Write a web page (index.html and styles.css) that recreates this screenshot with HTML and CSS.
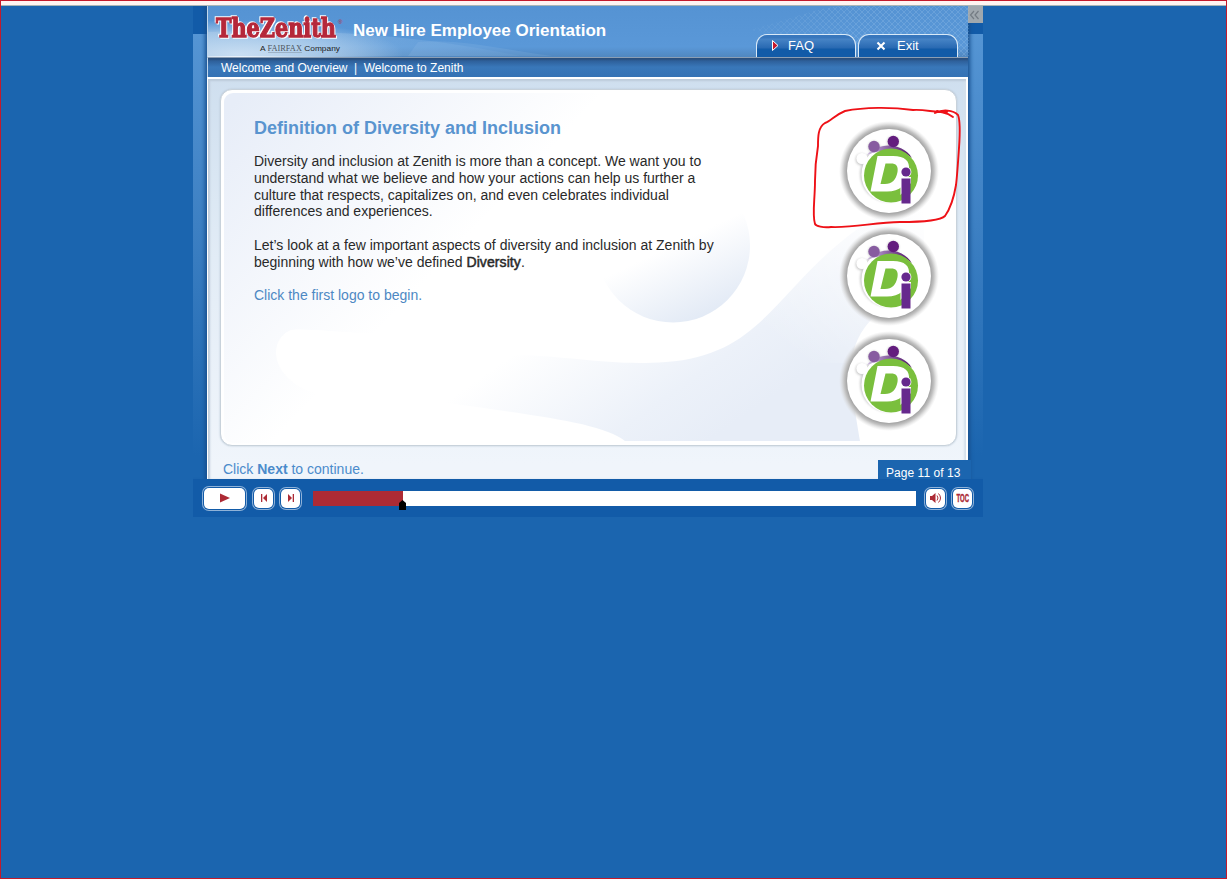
FILE: index.html
```html
<!DOCTYPE html>
<html lang="en">
<head>
<meta charset="utf-8">
<title>New Hire Employee Orientation</title>
<link rel="stylesheet" href="styles.css">
</head>
<body>
<svg class="defs" width="0" height="0">
  <defs>
    <radialGradient id="halo"><stop offset=".82" stop-color="#999"/><stop offset=".9" stop-color="#c4c4c4"/><stop offset="1" stop-color="#ddd" stop-opacity="0"/></radialGradient>
    <linearGradient id="arc"><stop offset="0" stop-color="#cdbbe0"/><stop offset=".5" stop-color="#875ca0"/><stop offset="1" stop-color="#511269"/></linearGradient>
    <filter id="soft" x="-30%" y="-30%" width="160%" height="160%"><feGaussianBlur stdDeviation="1"/></filter>
    <symbol id="di" viewBox="0 0 100 100">
      <circle cx="50" cy="50" r="50" fill="url(#halo)"/>
      <circle cx="50" cy="50" r="42" fill="#fff"/>
      <g filter="url(#soft)" fill="#aaa" opacity=".6"><circle cx="22.500" cy="38.500" r="6"/><circle cx="49" cy="53" r="28"/><circle cx="35" cy="26" r="6"/><circle cx="54" cy="21" r="6"/></g>
      <circle cx="23" cy="37.500" r="5.600" fill="#fff"/>
      <circle cx="51" cy="53.500" r="28.500" fill="#fff"/>
      <path d="M28 34C38 22 62 20 73 37C63 28 44 27 28 34Z" fill="url(#arc)"/>
      <circle cx="35" cy="25.500" r="5.700" fill="#875ca0"/>
      <circle cx="54.300" cy="20.500" r="5.700" fill="#631d7e"/>
      <circle cx="52" cy="54.500" r="27" fill="#7abf3d"/>
      <path fill-rule="evenodd" d="M38.500 35H54C66 35 71 40 70 49C68 64 61 70.500 48 70.500H31.500ZM46.500 42.500L41.500 63H46C53 63 57 59 58.500 51C59.500 45 57 42.500 52 42.500Z" fill="#fff"/>
      <path d="M61.500 56H72V62L61.500 74Z" fill="#fff"/>
      <circle cx="67" cy="51" r="5.400" fill="#fff"/>
      <circle cx="67" cy="51" r="4.600" fill="#66298d"/><path d="M62.500 57.500H71.500V82.500H62.500Z" fill="#66298d"/>
    </symbol>
  </defs>
</svg>
<div class="page">
  <div class="player">
    <div class="stage">
      <div class="wing wing-left"></div>
      <div class="course">
        <header class="header">
          <svg class="header-art" width="761" height="51" viewBox="0 0 761 51">
            <defs>
              <pattern id="mesh" width="6" height="6" patternUnits="userSpaceOnUse"><path d="M0 0L6 6M6 0L0 6" stroke="#a9ccee" stroke-width=".8" opacity=".3" fill="none"/></pattern>
              <linearGradient id="wave" x1="0" x2="1"><stop offset="0" stop-color="#a9cae9" stop-opacity=".6"/><stop offset="1" stop-color="#8dbbe6" stop-opacity=".08"/></linearGradient>
              <linearGradient id="fade"><stop offset="0" stop-color="#fff" stop-opacity="0"/><stop offset=".6" stop-color="#fff"/></linearGradient>
              <mask id="meshFade"><path d="M500 0H761V51H500Z" fill="url(#fade)"/></mask>
            </defs>
            <path d="M0 26C90 24 190 25 312 50H0Z" fill="url(#wave)"/>
            <path d="M210 36C250 32 290 43 345 50H200Z" fill="#a9ccee" opacity=".15"/>
            <path d="M540 24C590 12 610 0 640 0H761V50H720Z" fill="url(#mesh)" mask="url(#meshFade)"/>
          </svg>
          <svg class="brand" width="136" height="51" viewBox="0 0 136 51" role="img">
            <text class="brand-name" x="8" y="31" textLength="120" lengthAdjust="spacingAndGlyphs">TheZenith</text>
            <text class="brand-mark" x="130" y="18">®</text>
            <text class="brand-sub" x="52" y="44.500" textLength="80" lengthAdjust="spacingAndGlyphs">A <tspan class="fairfax">FAIRFAX</tspan> Company</text>
            <path d="M60 46.500H94" stroke="#8ea2b4" stroke-width=".7"/>
          </svg>
          <h1 class="course-title">New Hire Employee Orientation</h1>
          <nav class="tabs">
            <a class="tab"><svg width="9" height="13" viewBox="0 0 9 13"><path d="M1.500 1.500L7 6.500L1.500 11.500Z" fill="#c7182c" stroke="#fff"/></svg><span>FAQ</span></a>
            <a class="tab tab-exit"><svg width="10" height="10" viewBox="0 0 10 10"><path d="M1.500 1.500L8.500 8.500M8.500 1.500L1.500 8.500" stroke="#fff" stroke-width="2.100"/></svg><span>Exit</span></a>
          </nav>
        </header>
        <div class="crumbs"><span>Welcome and Overview</span><span class="bar">|</span><span>Welcome to Zenith</span></div>
        <main class="body">
          <section class="card">
            <svg class="card-art" width="733" height="350" viewBox="0 0 733 350">
              <defs>
                <linearGradient id="corner" gradientUnits="userSpaceOnUse" x1="0" y1="20" x2="190" y2="200"><stop offset="0" stop-color="#e7edf8"/><stop offset="1" stop-color="#fff"/></linearGradient>
                <linearGradient id="ball" x1=".3" y1=".2" x2=".68" y2="1"><stop offset=".4" stop-color="#fff"/><stop offset="1" stop-color="#e1e9f5"/></linearGradient>
                <linearGradient id="swoosh" gradientUnits="userSpaceOnUse" x1="235" y1="225" x2="375" y2="425"><stop offset=".25" stop-color="#fff"/><stop offset=".75" stop-color="#ecf1f9"/><stop offset="1" stop-color="#e7edf7"/></linearGradient>
                <linearGradient id="rise" gradientUnits="userSpaceOnUse" x1="690" y1="110" x2="570" y2="260"><stop offset="0" stop-color="#fff"/><stop offset="1" stop-color="#fff" stop-opacity="0"/></linearGradient>
              </defs>
              <path d="M0 0H480L250 260H80C45 265 45 236 70 236H180L130 350H0Z" fill="url(#corner)"/>
              <path d="M67 237C85 235 115 240 150 240L220 300L90 300C45 285 44 246 67 237Z" fill="#fff"/>
              <circle cx="449" cy="152.500" r="77" fill="url(#ball)"/>
              <path d="M155 300C220 270 230 262 290 262C350 263 385 273 442 269C546 261 552 187 650 125L700 110V200C665 205 626 232 627 280C629 309 632 323 636 348H401C374 326 284 320 155 300Z" fill="url(#swoosh)"/>
              <path d="M560 90H733V270H500Z" fill="url(#rise)"/>
            </svg>
            <div class="copy">
              <h2>Definition of Diversity and Inclusion</h2>
              <p>Diversity and inclusion at Zenith is more than a concept. We want you to<br>understand what we believe and how your actions can help us further a<br>culture that respects, capitalizes on, and even celebrates individual<br>differences and experiences.</p>
              <p>Let’s look at a few important aspects of diversity and inclusion at Zenith by<br>beginning with how we’ve defined <span class="term">Diversity</span>.</p>
              <p class="prompt">Click the first logo to begin.</p>
            </div>
            <div class="logos">
              <svg width="100" height="100"><use href="#di"/></svg>
              <svg width="100" height="100"><use href="#di"/></svg>
              <svg width="100" height="100"><use href="#di"/></svg>
            </div>
          </section>
          <footer class="footer">
            <div class="next">Click <b>Next</b> to continue.</div>
            <div class="pager">Page 11 of 13</div>
          </footer>
        </main>
      </div>
      <div class="wing wing-right"><div class="collapse"><svg width="13" height="17" viewBox="0 0 13 17"><path d="M6 5L2.500 9L6 13M10.500 5L7 9L10.500 13" fill="none" stroke="#747c84" stroke-width="1.200"/></svg></div></div>
    </div>
    <div class="controls">
      <button class="btn play"><svg width="12" height="10" viewBox="0 0 12 10"><path d="M1 .5L11 5L1 9.500Z" fill="#ad2b35"/></svg></button>
      <button class="btn back"><svg width="8" height="8" viewBox="0 0 8 8"><path d="M1 0H2.300V8H1ZM7 0V8L3 4Z" fill="#ad2b35"/></svg></button>
      <button class="btn forward"><svg width="8" height="8" viewBox="0 0 8 8"><path d="M5.700 0H7V8H5.700ZM1 0V8L5 4Z" fill="#ad2b35"/></svg></button>
      <div class="track"><div class="fill"></div><svg class="thumb" width="7" height="10" viewBox="0 0 7 10"><path d="M0 3L3.500 0L7 3V10H0Z"/></svg></div>
      <button class="btn sound"><svg width="14" height="12" viewBox="0 0 14 12"><path d="M1 4H3L6.500 1V11L3 8H1Z" fill="#ad2b35"/><path d="M8 3.500Q10 6 8 8.500M9.500 1.500Q13.500 6 9.500 10.500" fill="none" stroke="#ad2b35"/></svg></button>
      <button class="btn toc"><svg width="19" height="15" viewBox="0 0 19 15"><text x="3.500" y="11" textLength="12.500" lengthAdjust="spacingAndGlyphs">TOC</text></svg></button>
    </div>
  </div>
  <svg class="markup" width="152" height="124" viewBox="810 106 152 124">
    <path d="M937 111C943 113 947 112 953 117M935 113C943 109 953 110 958 115C960 120 960 134 959 148C958 163 957 177 956 185C954 197 950 209 945 216C940 221 921 222 900 222C876 222 854 228 831 227C823 228 816 226 815 224C812 215 815 199 815 181C815 165 816 158 818 146C818 137 818 127 825 123C831 121 835 115 845 111C864 107 892 107 913 110C925 109 935 113 947 112" fill="none" stroke="#ee1117" stroke-width="1.900" stroke-linejoin="round" stroke-linecap="round"/>
  </svg>
</div>
</body>
</html>
```

FILE: styles.css
```css
* { box-sizing: border-box; }
body { margin: 0; font-family: "Liberation Sans", Arial, sans-serif; }
.defs { position: absolute; }
svg { display: block; flex: none; }

.page {
  position: relative;
  height: 879px;
  padding: 5px 0 0 192px;
  overflow: hidden;
  border: 1px solid #c21a2c;
  background: linear-gradient(#fff4f2 0 4px, #a9b6b6 4px 5px, #1b65af 5px);
}
.player { width: 790px; }
.stage { display: flex; height: 473px; }

.wing { background: linear-gradient(#125ba8 0 28px, #5595d4 28px, #3d80c3 220px, #1b65af 450px); }
.wing-left { width: 14px; box-shadow: inset -5px 0 4px -3px #174f8e; }
.wing-right { width: 15px; box-shadow: inset 5px 0 4px -3px #174f8e; }
.collapse { width: 15px; height: 17px; background: #a0a8ae; }

.course { width: 761px; }
.header {
  position: relative;
  display: flex;
  height: 51px;
  border-left: 1px solid #c2d8ec;
  background:
    radial-gradient(ellipse 165px 34px at 30px 48px, #f4f9fe, rgba(210, 228, 244, .65) 55%, transparent),
    linear-gradient(#5593d3, #5a98d8 80%, #5087c0);
}
.header-art { position: absolute; inset: 0; }
.brand { position: relative; }
.brand-name {
  font: bold 26px "DejaVu Serif", serif;
  fill: #b5283a;
  stroke: #b5283a;
  stroke-width: 1.300px;
  filter: drop-shadow(1px 1px 0 #fff) drop-shadow(-1px -1px 0 #fff);
}
.brand-mark { font-size: 6px; fill: #b5283a; }
.brand-sub { font-size: 8px; fill: #222; }
.fairfax { font-family: "Liberation Serif", serif; fill: #4d5661; }
.course-title { position: relative; margin: 15px 0 0 9px; color: #fff; font-size: 17px; line-height: 20px; white-space: nowrap; }
.tabs { position: relative; display: flex; gap: 2px; margin: 28px 10px 0 auto; }
.tab {
  display: flex;
  align-items: center;
  gap: 8px;
  width: 100px;
  height: 23px;
  padding: 0 0 1px 14px;
  border: 1.500px solid #d9eaf8;
  border-bottom: 0;
  border-radius: 11px 11px 0 0;
  background: linear-gradient(#3877bd 0 3px, #4784c6 4px, #2869b2 13px, #125ba8 14px);
  color: #fff;
  font-size: 13px;
}
.tab-exit { gap: 11px; padding-left: 17px; }

.crumbs {
  display: flex;
  gap: 6.500px;
  height: 20px;
  padding: 2px 0 0 13px;
  border-top: 1px solid #8b9eb4;
  border-left: 1px solid #c2d8ec;
  background: linear-gradient(#294f7e 0 1px, #2e609b 3px, #3977b9 9px, #3572b4);
  color: #fff;
  font-size: 12px;
  line-height: 16px;
}
.body {
  height: 402px;
  padding: 12px 11px 0 12px;
  border: 2px solid #fff;
  border-bottom: 0;
  border-left-width: 1px;
  background: linear-gradient(#cfdfef, #e2ecf6 45%, #f0f5fb 96%);
  box-shadow: inset 2px 2px 2px #bdcbda, inset -2px 0 2px #d4e0eb;
}
.card {
  position: relative;
  display: flex;
  width: 737px;
  height: 357px;
  margin-top: -2px;
  border: 1px solid #c8d2db;
  border-radius: 12px;
  background: #fff;
  box-shadow: 0 0 2px #b4c3d2;
  overflow: hidden;
}
.card-art { position: absolute; left: 3px; top: 3px; border-radius: 9px; }
.copy { position: relative; width: 618px; padding: 28px 0 0 33px; color: #292929; font-size: 14px; line-height: 16.800px; white-space: nowrap; }
.copy h2 { margin: 0 0 15px; color: #5994cf; font-size: 18px; line-height: 20px; }
.copy p { margin: 0 0 16.800px; }
.term { -webkit-text-stroke: .5px #292929; letter-spacing: .08px; }
.copy .prompt { color: #4d88c3; }
.logos { position: relative; display: flex; flex-direction: column; gap: 5px; padding-top: 31px; }
.footer { display: flex; justify-content: space-between; height: 33px; }
.next { padding: 15px 0 0 3px; color: #4b8bcb; font-size: 14px; line-height: 17px; }
.pager { z-index: 1; width: 93px; height: 19px; margin: 14px -16px 0 0; padding: 5px 0 0 8px; background: #1b65af; color: #fff; font-size: 12px; line-height: 16px; letter-spacing: .05px; white-space: nowrap; }

.controls { display: flex; align-items: center; height: 38px; padding: 0 10px 0 11px; background: #125ba8; }
.btn { display: flex; align-items: center; justify-content: center; flex: none; width: 19px; height: 19px; padding: 0; border: 0; border-radius: 5px; background: #fff; box-shadow: 0 0 0 1px #125ba8, 0 0 0 2px #8fb2d8; }
.play { width: 41px; height: 21px; }
.back { margin-left: 9px; }
.forward { margin-left: 8px; }
.track { position: relative; width: 603px; height: 15px; margin-left: 13px; background: #fff; }
.fill { width: 90px; height: 15px; background: #ad2b35; }
.thumb { position: absolute; left: 86px; top: 9px; }
.sound { margin-left: 10px; }
.toc { margin-left: 8px; font: bold 10px "Liberation Sans", Arial, sans-serif; }
.toc text { fill: #ad2b35; stroke: #ad2b35; stroke-width: .4px; }
.markup { position: absolute; left: 809px; top: 105px; }
```
